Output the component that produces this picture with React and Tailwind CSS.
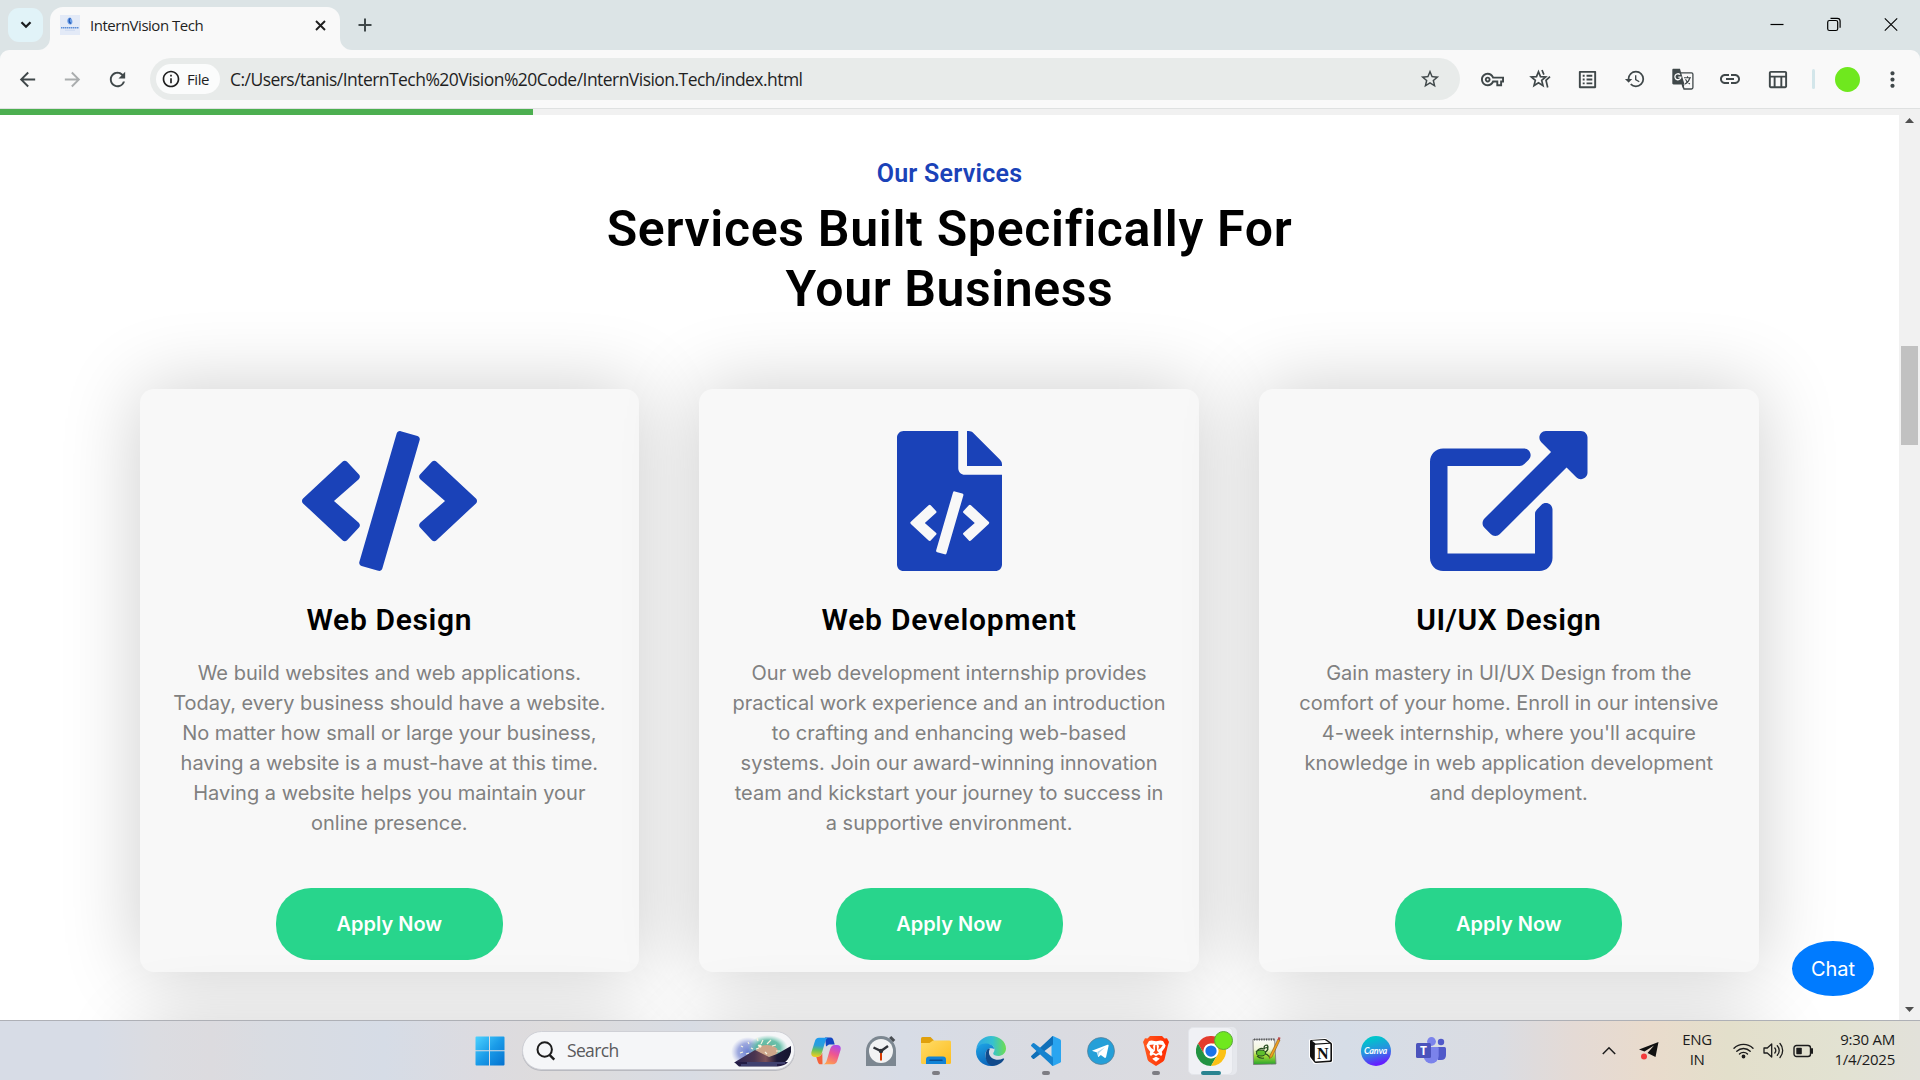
import { FaCode, FaFileCode } from "react-icons/fa";
import {
  MdArrowBack, MdArrowForward, MdRefresh, MdInfoOutline, MdStarBorder, MdOutlineVpnKey,
  MdOutlineListAlt, MdHistory, MdLink, MdOutlineTableChart, MdMoreVert,
} from "react-icons/md";

const ExternalLink = () => (
  <svg viewBox="0 0 576 512" className="h-[140px] w-[157.5px]" fill="currentColor">
    <path d="M576 24v127.984c0 21.461-25.96 31.98-40.971 16.971l-35.707-35.709-243.523 243.523c-9.373 9.373-24.568 9.373-33.941 0l-22.627-22.627c-9.373-9.373-9.373-24.569 0-33.941L442.756 76.676l-35.703-35.705C391.982 25.9 402.656 0 424.024 0H552c13.255 0 24 10.745 24 24zM407.029 270.794l-16 16A23.999 23.999 0 0 0 384 303.765V448H64V128h264a24.003 24.003 0 0 0 16.97-7.029l16-16C376.089 89.851 365.381 64 344 64H48C21.49 64 0 85.49 0 112v352c0 26.51 21.49 48 48 48h352c26.51 0 48-21.49 48-48V287.764c0-21.382-25.852-32.09-40.971-16.97z" />
  </svg>
);

const services = [
  {
    icon: <FaCode className="h-[140px] w-[175px]" />,
    title: "Web Design",
    spacing: "tracking-[0.65px]",
    lines: ["We build websites and web applications.", "Today, every business should have a website.", "No matter how small or large your business,", "having a website is a must-have at this time.", "Having a website helps you maintain your", "online presence."],
  },
  {
    icon: <FaFileCode className="h-[140px] w-[105px]" />,
    title: "Web Development",
    spacing: "tracking-[0.78px]",
    lines: ["Our web development internship provides", "practical work experience and an introduction", "to crafting and enhancing web-based", "systems. Join our award-winning innovation", "team and kickstart your journey to success in", "a supportive environment."],
  },
  {
    icon: <ExternalLink />,
    title: "UI/UX Design",
    spacing: "tracking-[0.55px]",
    lines: ["Gain mastery in UI/UX Design from the", "comfort of your home. Enroll in our intensive", "4-week internship, where you'll acquire", "knowledge in web application development", "and deployment."],
  },
];

function TabStrip() {
  return (
    <div className="flex h-[50px] items-start bg-[#dce4e6] text-[#1f1f1f]">
      <div className="mt-2 ml-2 flex h-[34px] w-[35px] items-center justify-center rounded-[11px] bg-[#e1f3f8]">
        <svg width="12" height="8" viewBox="0 0 12 8" fill="none" stroke="#1a1c1e" strokeWidth="2.3"><path d="M1.5 1.2 6 5.7l4.500-4.500" /></svg>
      </div>
      <div className="relative mt-[7px] ml-[7px] flex h-[43px] w-[290px] items-center rounded-t-[13px] bg-[#f9f9f9] pr-[14px] pb-[7px] pl-[10px]">
        <svg className="absolute bottom-0 -left-3" width="12" height="12"><path d="M12 0v12H0A12 12 0 0 0 12 0" fill="#f9f9f9" /></svg>
        <svg className="absolute -right-3 bottom-0" width="12" height="12"><path d="M0 0v12h12A12 12 0 0 1 0 0" fill="#f9f9f9" /></svg>
        <svg width="20" height="20" viewBox="0 0 20 20">
          <rect width="20" height="20" fill="#e3eaf7" />
          <path d="M10 2.500c-3 .5-3.200 4-2 5.800 1.200 1.600 3.400 1.600 4.200 0 .8-2-.2-5-2.200-5.800" fill="#6d9fe6" />
          <path d="M10.500 3.200c-2 1-1.800 4.500.5 5.200" stroke="#2258b5" strokeWidth="1.200" fill="none" />
          <path d="M1 12.700h18" stroke="#5c8ed8" strokeWidth="1.600" strokeDasharray="1.500 .5" />
          <path d="M5 15.200h10" stroke="#c3d3ee" strokeWidth=".7" />
        </svg>
        <span className="ml-[10px] text-[15px] leading-5 tracking-[-0.48px] whitespace-nowrap">InternVision Tech</span>
        <svg className="ml-auto" width="11" height="11" viewBox="0 0 11 11" stroke="#1f1f1f" strokeWidth="1.900"><path d="m1 1 9 9M10 1l-9 9" /></svg>
      </div>
      <svg className="mt-[18px] ml-[18px]" width="14" height="14" viewBox="0 0 14 14" stroke="#40484a" strokeWidth="2"><path d="M7 .5v13M.5 7h13" /></svg>
      <div className="mt-[17px] mr-[22px] ml-auto flex items-center gap-[43px]">
        <svg width="14" height="15" stroke="#000" strokeWidth="1.200"><path d="M.5 7.500h13" /></svg>
        <svg width="14" height="15" viewBox="0 0 14 15" fill="none" stroke="#000" strokeWidth="1.200"><rect x=".7" y="3.500" width="10" height="10" rx="1.800" /><path d="M3.500 1.300h6.800c1.600 0 2.800 1.200 2.800 2.800v6.700" /></svg>
        <svg width="14" height="15" viewBox="0 0 14 15" stroke="#000" strokeWidth="1.100"><path d="m.8 1.300 12.400 12.400M13.200 1.300.8 13.700" /></svg>
      </div>
    </div>
  );
}

function StarsIcon() {
  return (
    <svg width="22" height="22" viewBox="0 0 22 22" fill="none" stroke="currentColor" strokeWidth="1.700">
      <path d="m9.500 3.700 2 4.900 5.200.4-4 3.400 1.300 5.200-4.500-2.800-4.500 2.800 1.300-5.200-4-3.400 5.200-.4z" />
      <path d="m13 2 1.900 4.600M21 8.600l-4 3.700 1.700 7.200" />
    </svg>
  );
}

function TranslateIcon() {
  return (
    <svg width="22" height="22" viewBox="0 0 22 22">
      <path d="M7 4.800h12.500c.8 0 1.400.6 1.400 1.400v13.400c0 .8-.6 1.400-1.400 1.400H12z" fill="#f9f9f9" stroke="#40484a" strokeWidth="1.300" />
      <path d="M12 9.800h7M15.500 8.300v1.500M17.800 10c-.7 2.800-2.600 4.800-4.800 6M13.500 11.200c.8 2 2.500 3.800 4.500 4.700" fill="none" stroke="#40484a" strokeWidth="1.100" />
      <path d="M1.500.7H8l4.500 15.800H1.500c-.7 0-1.200-.5-1.200-1.200V1.900C.3 1.200.8.7 1.500.7" fill="#40484a" />
      <path d="M9.500 16.500h3L11 20.500z" fill="#40484a" />
      <path d="M8 6.600a3 3 0 1 0 .9 2.500H6.300" fill="none" stroke="#f9f9f9" strokeWidth="1.300" />
    </svg>
  );
}

function Toolbar() {
  const cell = "flex w-[47.5px] justify-center";
  return (
    <div className="bg-[#dce4e6]">
      <div className="flex h-[59px] items-center rounded-t-[9px] border-b border-[#dfe1e1] bg-[#f9f9f9] text-[#40484a]">
        <div className="ml-[5px] flex w-[135px] items-center">
          <span className="flex w-[46px] justify-center"><MdArrowBack size={23} /></span>
          <span className="flex w-[45px] justify-center text-[#aaadae]"><MdArrowForward size={23} /></span>
          <span className="flex w-[45px] justify-center"><MdRefresh size={23} /></span>
        </div>
        <div className="ml-[10px] flex h-[42px] w-[1310px] items-center rounded-full bg-[#e8ebea] pr-[19px] pl-[6px]">
          <div className="flex h-[30px] w-[64px] items-center rounded-full bg-[#fbfcfc] pl-[5px] text-[#1f1f1f]">
            <MdInfoOutline size={20} />
            <span className="ml-[6px] text-[15px] font-medium tracking-[-0.4px]">File</span>
          </div>
          <span className="ml-[10px] text-[17.5px] tracking-[-0.54px] whitespace-nowrap text-[#1f1f1f]">C:/Users/tanis/InternTech%20Vision%20Code/InternVision.Tech/index.html</span>
          <MdStarBorder size={22} className="ml-auto" />
        </div>
        <div className="ml-[9px] flex items-center">
          <span className={cell}><MdOutlineVpnKey size={23} /></span>
          <span className={cell}><StarsIcon /></span>
          <span className={cell}><MdOutlineListAlt size={23} /></span>
          <span className={cell}><MdHistory size={22} /></span>
          <span className={cell}><TranslateIcon /></span>
          <span className={cell}><MdLink size={24} /></span>
          <span className={cell}><MdOutlineTableChart size={23} /></span>
        </div>
        <span className="ml-[10px] h-5 w-[3px] rounded bg-[#d3e6ea]" />
        <span className="ml-[20px] size-[25px] rounded-full bg-[#6fe81e]" />
        <MdMoreVert size={25} className="ml-[20px]" />
      </div>
    </div>
  );
}

function Card({ s }) {
  return (
    <article className="flex h-[583px] flex-col items-center rounded-[14px] bg-[#f8f8f8] pt-[42px] pb-3 shadow-[0_0_80px_rgba(0,0,0,0.2)]">
      <div className="text-[#1a42b8]">{s.icon}</div>
      <h3 className="mt-[31px] font-[Roboto] text-[30px] leading-9 font-semibold text-black"><span className={s.spacing}>{s.title}</span></h3>
      <p className="mt-5 text-center text-[20px] leading-[30px] text-[#808080]">
        {s.lines.map((l) => <span key={l} className="block whitespace-nowrap">{l}</span>)}
      </p>
      <button className="mt-auto h-[72px] w-[227px] rounded-[35px] bg-[#28d58c] text-[20px] font-semibold text-white">Apply Now</button>
    </article>
  );
}

function Page() {
  return (
    <div className="flex h-[911px]">
      <main className="relative h-full w-[1899px] overflow-hidden bg-white font-[Inter]">
        <div className="h-[6px] bg-[#f1f1f1]"><div className="h-full w-[533px] bg-[#4caf50]" /></div>
        <header className="mt-[44px] text-center font-[Roboto] font-semibold">
          <p className="text-[25px] leading-[30px] tracking-[0.25px] text-[#1a42b8]">Our Services</p>
          <h2 className="mt-[10px] text-[50px] leading-[60px] text-black"><span className="tracking-[0.68px]">Services Built Specifically For</span><br /><span className="tracking-[0.57px]">Your Business</span></h2>
        </header>
        <section className="mt-[70px] ml-[139.5px] grid w-[1619.2px] grid-cols-3 gap-[60px]">
          {services.map((s) => <Card key={s.title} s={s} />)}
          {services.map((s) => <div key={s.title} className="h-[583px] rounded-[14px] bg-[#f8f8f8] shadow-[0_0_80px_rgba(0,0,0,0.2)]" />)}
        </section>
        <button className="absolute right-[25px] bottom-[24px] h-[55px] w-[82px] rounded-[50%] bg-[#007bff] text-[20px] text-white">Chat</button>
      </main>
      <div className="flex w-[21px] flex-col items-center bg-[#f1f1f1]">
        <svg className="mt-[9px]" width="9" height="5"><path d="M0 5 4.500 0 9 5z" fill="#505050" /></svg>
        <div className="mt-[223px] h-[99px] w-[17px] bg-[#c1c1c1]" />
        <svg className="mt-auto mb-[8px]" width="9" height="5"><path d="M0 0h9L4.500 5z" fill="#505050" /></svg>
      </div>
    </div>
  );
}

const WindowsLogo = () => (
  <svg width="30" height="30" viewBox="0 0 30 30">
    <defs><linearGradient id="win" x1="0" y1="0" x2="1" y2="1"><stop offset="0" stopColor="#4cd2ff" /><stop offset=".5" stopColor="#1a9be8" /><stop offset="1" stopColor="#0471cf" /></linearGradient></defs>
    <path fill="url(#win)" d="M1.500.5H14v13.800H.5V1.500q0-1 1-1M15 .5h13.500q1 0 1 1v12.800H15zM.5 15.300H14v14.200H1.500q-1 0-1-1zM15 15.300h14.500v13.200q0 1-1 1H15z" />
  </svg>
);
const SearchArt = () => (
  <svg width="62" height="36" viewBox="0 0 62 36">
    <defs>
      <radialGradient id="sa"><stop offset="0" stopColor="#6a80d0" /><stop offset=".6" stopColor="#8a97d8" stopOpacity=".8" /><stop offset="1" stopColor="#a8b2e6" stopOpacity="0" /></radialGradient>
      <radialGradient id="sb"><stop offset="0" stopColor="#5fb49a" /><stop offset=".6" stopColor="#51b69c" stopOpacity=".85" /><stop offset="1" stopColor="#7fd0bb" stopOpacity="0" /></radialGradient>
      <linearGradient id="sc" x1="0" x2="1"><stop offset="0" stopColor="#2b2450" /><stop offset=".35" stopColor="#4a3550" /><stop offset=".55" stopColor="#7c5158" /><stop offset=".75" stopColor="#1d1a3a" /><stop offset="1" stopColor="#15152f" /></linearGradient>
    </defs>
    <ellipse cx="17" cy="19" rx="17" ry="15" fill="url(#sa)" />
    <ellipse cx="37" cy="15" rx="20" ry="13" fill="url(#sb)" />
    <ellipse cx="36" cy="18" rx="11" ry="6" fill="#e8a184" opacity=".8" />
    <path d="M4 29 24 17l14 7 8-3 14-8v6c-2 8-7 13-15 13H12z" fill="url(#sc)" />
    <path d="M3 29h54c-3 3.500-8 4.500-12 4.500H8z" fill="#231c45" />
    <path d="M16 30h38M10 32h36" stroke="#6c7bb0" strokeWidth=".8" />
    <path d="m10 13 2 1M17 9l1 2M9 20l3-1M15 21l3-1M26 5l1 3M32 7l-2 4M36 11l4-4M41 13l4-1M45 18h4M27 12l3 2M25 16l3-1M34 19l2 2M20 15l2 1" stroke="#f5f3df" strokeWidth="1.200" />
    <circle cx="29" cy="13" r="1.600" fill="#fff6dc" />
  </svg>
);
const Copilot = () => (
  <svg width="30" height="28" viewBox="0 0 30 28">
    <defs>
      <linearGradient id="cp1" x1=".4" y1="0" x2=".3" y2="1"><stop offset="0" stopColor="#1d9bf0" /><stop offset=".4" stopColor="#2c9fd8" /><stop offset=".65" stopColor="#67c25c" /><stop offset="1" stopColor="#f3ce1e" /></linearGradient>
      <linearGradient id="cp2" x1=".7" y1="0" x2=".3" y2="1"><stop offset="0" stopColor="#b04be8" /><stop offset=".45" stopColor="#ee5691" /><stop offset="1" stopColor="#ffa04e" /></linearGradient>
    </defs>
    <path d="M14 .5h5.500c2 0 2.600 1.500 3.200 3.400l1 3.600H18l-3 2z" fill="#1446c2" />
    <path d="M8 .8h9.500c-2 .4-2.700 2-3.300 4L11 15.500c-.8 2.800-2 4.500-5 4.500H4C.6 20-.3 17.500.6 14.500L3.800 4.400C4.500 2.200 5.700.8 8 .8" fill="url(#cp1)" />
    <path d="M11.500 27.300H9.800c-2 0-2.700-1.500-3.300-3.400L5.300 20c4 0 5.200-2 6-4.500z" fill="#f4623a" />
    <path d="M22 27.300h-9.500c2-.4 2.700-2 3.300-4L19 12.600c.8-2.800 2-4.600 5-4.600h2c3.400 0 4.300 2.500 3.400 5.500l-3.200 10.200c-.7 2.200-1.900 3.600-4.200 3.600" fill="url(#cp2)" />
  </svg>
);
const Clock = () => (
  <svg width="30" height="30" viewBox="0 0 30 30">
    <path d="m23 2 2.300-2 4 4-2.300 2.300z" fill="#4a4e53" />
    <path d="M0 30V15a15 15 0 0 1 30 0v15z" fill="#7c8791" />
    <circle cx="15" cy="15" r="12" fill="#f2f3f4" />
    <path d="m7.500 11.500 7.500 3.500 7-5" stroke="#303238" strokeWidth="2.400" fill="none" />
    <path d="M15 15v9.500" stroke="#d83b01" strokeWidth="2" /><circle cx="15" cy="15" r="2.200" fill="#303238" />
  </svg>
);
const Explorer = () => (
  <svg width="30" height="27" viewBox="0 0 30 27">
    <defs><linearGradient id="fo" x1="0" y1="0" x2="1" y2="1"><stop offset="0" stopColor="#ffdc68" /><stop offset="1" stopColor="#fdbd1f" /></linearGradient></defs>
    <path d="M0 1.500Q0 0 1.500 0h8L13 3.500V9H0z" fill="#e0a00c" />
    <path d="M0 6h8.500L12 3.500h16.500Q30 3.500 30 5v20.500q0 1.500-1.500 1.500h-27Q0 27 0 25.500z" fill="url(#fo)" />
    <path d="M5 27v-4.500Q5 19.500 8 19.500h14q3 0 3 3V27z" fill="#1183d6" /><path d="M9 23.300h12" stroke="#0a4f92" strokeWidth="1.500" strokeLinecap="round" />
  </svg>
);
const Edge = () => (
  <svg width="30" height="30" viewBox="0 0 30 30">
    <defs>
      <linearGradient id="e1" x1="0" y1=".5" x2="1" y2=".5"><stop offset="0" stopColor="#2fa6e6" /><stop offset=".55" stopColor="#35c1d0" /><stop offset="1" stopColor="#6ede50" /></linearGradient>
      <linearGradient id="e2" x1=".2" y1="0" x2=".6" y2="1"><stop offset="0" stopColor="#1da2e4" /><stop offset="1" stopColor="#0b62b8" /></linearGradient>
    </defs>
    <path d="M.3 13C1.200 5.500 7.500 0 15 0c8.500 0 15 5.700 15 12.600 0 4.400-3.500 7.400-7.300 7.400-3.500 0-5.500-1.200-5.500-2.500 0-1 1.300-1.500 1.300-4C18.500 10 15 8 10 8 5.500 8 2 10 .3 13" fill="url(#e1)" />
    <path d="M0 15.500C.2 11 4 7.500 9.500 7.500c4 0 8 1.700 9 5.500-5-2-9 .5-9 6 0 6 5 10 10.500 10-2 .9-3.200 1-5 1C6.500 30 0 23.500 0 15.500" fill="url(#e2)" />
    <path d="M11.500 13.200C8 17 9 29.500 17.500 29.800c4.500-.3 8.300-2.800 10.500-6.300.5-.9-.3-1.300-1-.9-5.500 2.800-13.500.4-14-5.600-.1-1.500.2-2.800 1-4.200-1 0-1.800 0-2.500.4" fill="#114a8b" />
  </svg>
);
const VSCode = () => (
  <svg width="30" height="30" viewBox="0 0 30 30">
    <path d="m22 0 7 3.200q1 .5 1 1.600v20.400q0 1.100-1 1.600L22 30l-1.500-1V1z" fill="#2aa5f0" />
    <path d="M22 0v8.500L3.300 22.700q-.8.600-1.500 0L.4 21.300q-.8-.8 0-1.600L20.800.8z" fill="#0f6fb8" />
    <path d="M22 30v-8.500L3.300 7.300q-.8-.6-1.500 0L.4 8.700q-.8.800 0 1.600l20.400 18.900z" fill="#1583cf" />
  </svg>
);
const Telegram = () => (
  <svg width="28" height="28" viewBox="0 0 28 28">
    <circle cx="14" cy="14" r="13.500" fill="#259fd8" stroke="#5c7c92" strokeWidth=".7" />
    <path d="m5.500 13.600 15-5.800c.8-.3 1.300.2 1.100 1l-2.500 11.300c-.2.800-.8 1-1.500.6l-3.800-2.800-2 1.900c-.3.300-.7.200-.8-.2l-1-4.200-4.500-1.400c-.5-.1-.5-.3 0-.4" fill="#fff" /><path d="m10.200 15 7.800-4.700-6.100 5.800-.4 3z" fill="#a9d4ec" />
  </svg>
);
const Brave = () => (
  <svg width="26" height="30" viewBox="0 0 26 30">
    <defs><linearGradient id="br" x1="0" x2="1"><stop offset="0" stopColor="#ff5a1f" /><stop offset="1" stopColor="#ff2a00" /></linearGradient></defs>
    <path d="M7 0h12l2.500 2.500 2.500-.2L26 6l-1 3-3.500 14.500q-.5 1.500-1.700 2.300L13 30l-6.800-4.200q-1.200-.8-1.700-2.300L1 9 0 6l2-3.700 2.500.2z" fill="url(#br)" />
    <path d="m8.500 4.500 4.500.8 4.500-.8 2.500.6 2.600 4.400-.8 2.300-3 4 .6 2.400-1.200 1.700-2.300-1.400-2.900 1.500-2.900-1.500-2.300 1.400-1.200-1.700.6-2.400-3-4-.8-2.300L6 5.100z" fill="#fff" />
    <path d="m6.300 9 4.500-.6-.8 2.200.8 3.200-2.600-1.700zM19.700 9l-4.500-.6.8 2.200-.8 3.200 2.600-1.700zM12.300 9h1.400l.5 6 1.800 1.400-3 1.500-3-1.500 1.800-1.400z" fill="#fb4a16" />
    <path d="m13 20.800 3.800 2L13 25.700l-3.800-2.900z" fill="#fff" />
  </svg>
);
const Chrome = () => (
  <div className="relative flex h-12 w-[45px] items-center justify-center rounded-[5px] border border-[#e3e5ea] bg-[#f0f1f5] shadow-[4px_0_0_#e6e8ed]">
    <svg width="30" height="30" viewBox="0 0 48 48">
      <circle cx="24" cy="24" r="24" fill="#fff" />
      <path d="M3.200 12A24 24 0 0 1 44.800 12H24a12 12 0 0 0-10.400 18z" fill="#e33b2e" />
      <path d="M3.200 12A24 24 0 0 0 24 48l10.400-18A12 12 0 0 1 13.600 30z" fill="#229342" />
      <path d="M44.800 12A24 24 0 0 1 24 48l10.400-18A12 12 0 0 0 24 12z" fill="#fbc116" />
      <circle cx="24" cy="24" r="11.500" fill="#fff" /><circle cx="24" cy="24" r="9" fill="#1a73e8" />
    </svg>
    <span className="absolute top-[3px] -right-px size-[19px] rounded-full border border-[#5aa83a] bg-[#6fe81e]" />
  </div>
);
const NotepadPP = () => (
  <svg width="30" height="30" viewBox="0 0 30 30">
    <defs><linearGradient id="np" x1="0" y1="0" x2="0" y2="1"><stop offset="0" stopColor="#fafafa" /><stop offset=".4" stopColor="#f3f6dc" /><stop offset=".65" stopColor="#a5d936" /><stop offset="1" stopColor="#25a52c" /></linearGradient></defs>
    <path d="M2 3.500 23.500 3 25 28l-22.500.5z" fill="url(#np)" stroke="#777" strokeWidth=".8" />
    <path d="M3 3.500h20.500" stroke="#55585c" strokeWidth="1.800" strokeDasharray="1.200 1.200" />
    <path d="M5 16q4-5 8-3 3-3 4 0-1 3-5 4 5 1 7 5M6 20q3 3 7 2M13 12q0-3 3-3 2 2 0 4" fill="none" stroke="#274d20" strokeWidth="1.200" /><ellipse cx="10" cy="17" rx="4.500" ry="3" fill="#5fbf2c" stroke="#274d20" />
    <path d="m27 3 2 1-8 17-2.500 1.500.5-3z" fill="#f0a21f" stroke="#8a5a1a" strokeWidth=".6" /><path d="m26.500 3.500 1-2.500 2 .8-.8 2.700z" fill="#b94b4b" />
  </svg>
);
const Notion = () => (
  <svg width="24" height="26" viewBox="0 0 24 26">
    <path d="M1 2.500 16.500 1 23 5.500V23.500L5.500 25 1 19z" fill="#fff" stroke="#fff" strokeWidth="2" strokeLinejoin="round" />
    <path d="M1 3q0-.9 1-1L16 1q1 0 1.700.5L22 4.600q1 .6 1 1.600v16.600q0 1.100-1.200 1.200L7 25q-1.200 0-1.900-.9L1.600 19.500Q1 18.700 1 17.800z" fill="#111" />
    <path d="m3 2.800 12.800-.9 4.200 2.800-13.500.8z" fill="#fff" /><path d="M5.800 7.500q0-.8.800-.8l14-.9q.8 0 .8.800v15.100q0 .8-.8.8l-14 .9q-.8 0-.8-.8z" fill="#fff" />
    <text x="8" y="20.500" fontFamily="Liberation Serif" fontWeight="700" fontSize="16" fill="#111">N</text>
  </svg>
);
const Canva = () => (
  <span className="flex size-[30px] items-center justify-center rounded-full bg-[linear-gradient(165deg,#00c4cc_15%,#2a8fe0_50%,#6420ff_85%)] font-['Lato'] text-[9px] font-bold tracking-[-0.2px] text-white italic">Canva</span>
);
const Teams = () => (
  <svg width="30" height="27" viewBox="0 0 30 27">
    <circle cx="25" cy="5" r="3.200" fill="#5059c9" /><path d="M20 10h8.500q1.500 0 1.500 1.500V18q0 5-5 5h-3z" fill="#5059c9" />
    <circle cx="15.500" cy="4.500" r="4.400" fill="#7b83eb" /><path d="M9 10h12.500q1.200 0 1.200 1.200V19a7.500 7.500 0 0 1-15 0z" fill="#7b83eb" />
    <rect y="6" width="15" height="15" rx="1.500" fill="#4b53bc" />
    <text x="7.500" y="17.800" textAnchor="middle" fontFamily="Open Sans" fontWeight="700" fontSize="12" fill="#fff">T</text>
  </svg>
);

const apps = [
  [Copilot], [Clock], [Explorer, "h-1 w-2 bg-[#7d7d83]"], [Edge], [VSCode, "h-1 w-2 bg-[#7d7d83]"], [Telegram],
  [Brave, "h-1 w-2 bg-[#7d7d83]"], [Chrome, "h-1 w-5 bg-[#2a8490]"], [NotepadPP], [Notion], [Canva], [Teams],
];

function Taskbar() {
  return (
    <footer className="flex h-[60px] items-center border-t border-[#aeb0b6] bg-[linear-gradient(90deg,#d7dce6_0%,#d7dce6_5%,#dbdce1_8%,#dcdbdf_11%,#d9dce2_14%,#d6dce6_20%,#dcdbe0_25%,#dedcdc_29%,#d8dce4_36%,#dedcdc_40%,#d7dce6_47%,#dadbe1_55%,#dcdce0_63%,#d6dde7_70%,#dadce2_78%,#e4dad5_82%,#e9dbcc_86%,#e3dfcb_90%,#e2e2d2_96%,#e2e1da_100%)] text-[#1c1c1c]">
      <div className="ml-[462px] flex w-[55px] justify-center"><WindowsLogo /></div>
      <div className="mr-[3px] ml-[5px] flex h-[39px] w-[273px] items-center rounded-full border border-[#cfd0d6] bg-[#f5f6f8] pr-px pl-[13px] shadow-[0_1px_0_#b9bac0]">
        <svg width="20" height="20" viewBox="0 0 20 20" fill="none" stroke="#1c1c1c" strokeWidth="2"><circle cx="8.700" cy="8.500" r="7.200" /><path d="m13.500 13.800 4.800 4.800" strokeWidth="2.400" /></svg>
        <span className="ml-[11px] text-[17.5px] tracking-[-0.65px] text-[#5a5a5c]">Search</span>
        <span className="ml-auto"><SearchArt /></span>
      </div>
      {apps.map(([Icon, bar], i) => (
        <div key={i} className="relative flex h-[59px] w-[55px] items-center justify-center">
          <Icon />
          {bar && <span className={`absolute bottom-[5px] rounded-full ${bar}`} />}
        </div>
      ))}
      <div className="mr-[25px] ml-auto flex items-center">
        <svg width="14" height="9" viewBox="0 0 14 9" fill="none" stroke="#1c1c1c" strokeWidth="1.500"><path d="m.8 8 6.200-6.200L13.200 8" /></svg>
        <svg className="ml-[23px]" width="20" height="19" viewBox="0 0 20 19"><path d="M19.500 1 0 8.500l5.500 2L15 4.500 8.500 12l8 4z" fill="#111" /><circle cx="5" cy="15.500" r="3" fill="#f23b3b" /></svg>
        <div className="mb-[3px] ml-[21px] w-[34px] text-center text-[15px] leading-5 tracking-[-0.4px]">ENG<br />IN</div>
        <svg className="ml-[19px]" width="21" height="17" viewBox="0 0 21 17" fill="none" stroke="#1c1c1c" strokeWidth="1.400" strokeLinecap="round"><path d="M1 6.300a13.500 13.500 0 0 1 19 0M3.800 9.300a9.500 9.500 0 0 1 13.400 0M6.500 12a5.700 5.700 0 0 1 8 0" /><circle cx="10.500" cy="14.500" r="1.200" fill="#1c1c1c" /></svg>
        <svg className="ml-[9px]" width="21" height="17" viewBox="0 0 21 17" fill="none" stroke="#1c1c1c" strokeWidth="1.300" strokeLinecap="round" strokeLinejoin="round"><path d="M1 6h3.300L8.700 2v13l-4.400-4H1zM11.800 6a4 4 0 0 1 0 5M14.300 3.700a7 7 0 0 1 0 9.600M17 1.500a10.500 10.500 0 0 1 0 14" /></svg>
        <svg className="ml-[9px]" width="21" height="14" viewBox="0 0 21 14" fill="none" stroke="#1c1c1c" strokeWidth="1.400"><rect x="1" y="1.500" width="16.500" height="11" rx="2.500" /><rect x="3.300" y="3.800" width="5.500" height="6.400" rx=".6" fill="#1c1c1c" stroke="none" /><path d="M19 5v4" strokeWidth="2" strokeLinecap="round" /></svg>
        <div className="mb-[4px] ml-[20px] w-[61px] text-right text-[15px] leading-5 tracking-[-0.25px] whitespace-nowrap">9:30 AM<br />1/4/2025</div>
      </div>
    </footer>
  );
}

export default function App() {
  return (
    <div className="h-[1080px] w-[1920px] overflow-hidden font-['Open_Sans',sans-serif]">
      <TabStrip />
      <Toolbar />
      <Page />
      <Taskbar />
    </div>
  );
}
